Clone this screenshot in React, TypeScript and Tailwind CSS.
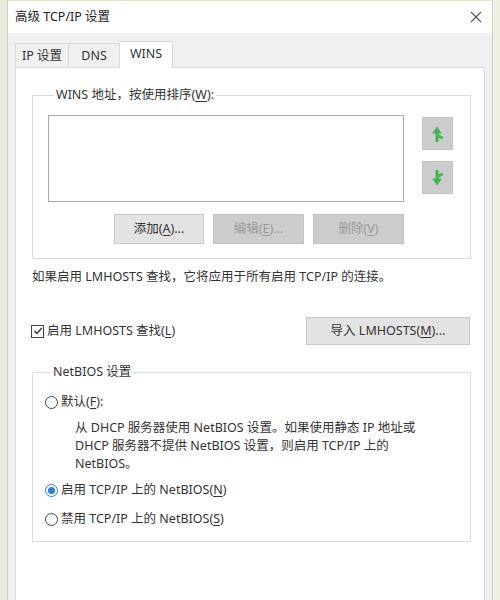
import React from "react";

const font = "font-['Noto_Sans','Noto_Sans_CJK_SC',sans-serif]";

// underlined access key, e.g. 添加(<u>A</u>)...
function Key({ k }: { k: string }) {
  return (
    <>
      (<span className="underline underline-offset-2">{k}</span>)
    </>
  );
}

function Btn({
  children,
  disabled,
  className = "",
}: {
  children: React.ReactNode;
  disabled?: boolean;
  className?: string;
}) {
  return (
    <div
      className={
        "flex items-center justify-center border text-[12.5px] leading-4 " +
        (disabled
          ? "bg-[#cccccc] border-[#c4c4c4] text-[#9b9b9b] "
          : "bg-[#e3e3e3] border-[#c9c9c9] text-[#333] ") +
        className
      }
    >
      {children}
    </div>
  );
}

function Radio({ checked }: { checked?: boolean }) {
  return (
    <span
      className={
        "w-[13px] h-[13px] rounded-full border flex items-center justify-center shrink-0 bg-white " +
        (checked ? "border-[#2b7fd6]" : "border-[#444]")
      }
    >
      {checked && <span className="w-[7px] h-[7px] rounded-full bg-[#2b7fd6]" />}
    </span>
  );
}

// green move up / move down arrow with a hooked tail
function MoveArrow({ down }: { down?: boolean }) {
  return (
    <svg width="12" height="16" viewBox="0 0 12 16" className={down ? "rotate-180 -scale-x-100" : ""}>
      <path d="M5 15 V6 Q5 10.5 9.5 11.5" fill="none" stroke="#43b552" strokeWidth="3" strokeLinecap="round" />
      <path d="M1 7 L5 1.2 L9 7 Z" fill="#43b552" stroke="#43b552" strokeWidth="1" strokeLinejoin="round" />
    </svg>
  );
}

export default function App() {
  return (
    <div className={"w-[500px] h-[600px] overflow-hidden flex bg-[#eef0e4] text-[#333] " + font}>
      {/* sliver of the window behind */}
      <div className="w-[7px] bg-[#e8ebde]" />

      <div className="w-[486px] flex flex-col bg-[#f0f0f0] border-x border-[#cdd5b8]">
        {/* title bar */}
        <div className="h-[33px] bg-white flex items-center justify-between pl-[7px] pr-[8px] border-t border-[#e5e9bf]">
          <span className="text-[12.5px] leading-4 text-[#222]">高级 TCP/IP 设置</span>
          <svg width="12" height="12" viewBox="0 0 12 12" className="mr-[2px]">
            <path d="M1 1 L11 11 M11 1 L1 11" stroke="#555" strokeWidth="1.1" />
          </svg>
        </div>

        <div className="flex-1 flex flex-col px-[7px] pt-[8px]">
          {/* tabs */}
          <div className="flex items-end h-[26px] text-[12.5px] leading-4 relative z-10">
            <div className="w-[54px] h-[24px] border border-[#d9d9d9] border-b-0 flex items-center justify-center">
              IP 设置
            </div>
            <div className="w-[51px] h-[24px] border border-[#d9d9d9] border-b-0 border-l-0 flex items-center justify-center">
              DNS
            </div>
            <div className="w-[53px] h-[27px] -mb-px bg-white border border-[#d9d9d9] border-b-0 border-l-0 flex items-center justify-center pb-[2px]">
              WINS
            </div>
          </div>

          {/* tab page */}
          <div className="flex-1 bg-white border border-[#d9d9d9] border-b-0 pl-[16px] pr-[13px] pt-[19px] text-[12.5px] leading-4">
            <fieldset className="border border-[#dcdcdc] pl-[15px] pr-[16px] pb-[14px]">
              <legend className="ml-[6px] px-[2px]">
                WINS 地址，按使用排序<Key k="W" />:
              </legend>
              <div className="flex mt-[12px]">
                <div className="flex flex-col">
                  <div className="w-[356px] h-[87px] border border-[#a9a9a9] bg-white" />
                  <div className="flex justify-end gap-[9px] mt-[12px]">
                    <Btn className="w-[90px] h-[30px]">
                      添加<Key k="A" />...
                    </Btn>
                    <Btn disabled className="w-[91px] h-[30px]">
                      编辑<Key k="E" />...
                    </Btn>
                    <Btn disabled className="w-[91px] h-[30px]">
                      删除<Key k="V" />
                    </Btn>
                  </div>
                </div>
                <div className="flex flex-col gap-[11px] ml-[18px] mt-[2px]">
                  <div className="w-[31px] h-[33px] bg-[#cccccc] border border-[#c4c4c4] flex items-center justify-center">
                    <MoveArrow />
                  </div>
                  <div className="w-[31px] h-[33px] bg-[#cccccc] border border-[#c4c4c4] flex items-center justify-center">
                    <MoveArrow down />
                  </div>
                </div>
              </div>
            </fieldset>

            <p className="mt-[10px]">如果启用 LMHOSTS 查找，它将应用于所有启用 TCP/IP 的连接。</p>

            <div className="flex items-center justify-between mt-[32px] pr-[1px]">
              <div className="flex items-center gap-[3px] -ml-[1px]">
                <span className="w-[13px] h-[13px] border border-[#444] bg-white flex items-center justify-center">
                  <svg width="10" height="10" viewBox="0 0 10 10">
                    <path d="M1.5 5 L4 7.5 L8.8 2" fill="none" stroke="#333" strokeWidth="1.3" />
                  </svg>
                </span>
                <span>
                  启用 LMHOSTS 查找<Key k="L" />
                </span>
              </div>
              <Btn className="w-[164px] h-[28px]">
                导入 LMHOSTS<Key k="M" />...
              </Btn>
            </div>

            <fieldset className="border border-[#dcdcdc] mt-[19px] pl-[12px] pr-[12px] pb-[14px]">
              <legend className="ml-[6px] px-[2px]">NetBIOS 设置</legend>
              <label className="flex items-center gap-[3px] mt-[14px]">
                <Radio />
                <span>
                  默认<Key k="F" />:
                </span>
              </label>
              <p className="ml-[30px] mt-[9px] leading-[18px]">
                从 DHCP 服务器使用 NetBIOS 设置。如果使用静态 IP 地址或
                <br />
                DHCP 服务器不提供 NetBIOS 设置，则启用 TCP/IP 上的
                <br />
                NetBIOS。
              </p>
              <label className="flex items-center gap-[3px] mt-[9px]">
                <Radio checked />
                <span>
                  启用 TCP/IP 上的 NetBIOS<Key k="N" />
                </span>
              </label>
              <label className="flex items-center gap-[3px] mt-[13px]">
                <Radio />
                <span>
                  禁用 TCP/IP 上的 NetBIOS<Key k="S" />
                </span>
              </label>
            </fieldset>
          </div>
        </div>
      </div>
    </div>
  );
}
